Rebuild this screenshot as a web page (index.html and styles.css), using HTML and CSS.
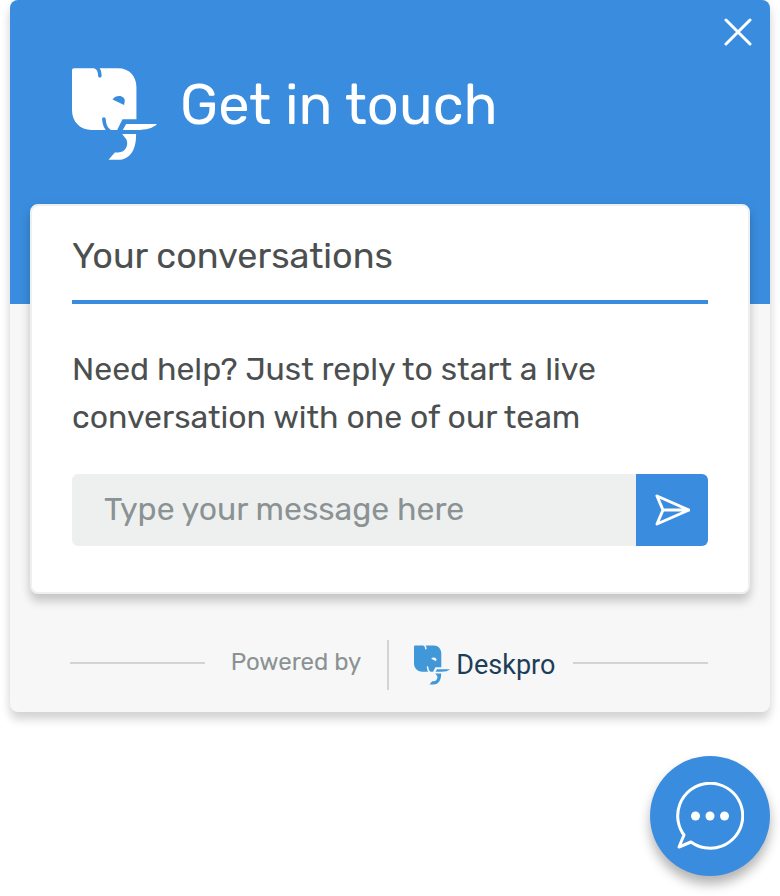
FILE: index.html
```
<!DOCTYPE html>
<html lang="en">
<head>
<meta charset="utf-8">
<meta name="viewport" content="width=device-width, initial-scale=1">
<title>Get in touch</title>
<link rel="stylesheet" href="styles.css">
</head>
<body>
<svg class="symbols" aria-hidden="true">
  <symbol id="elephant" viewBox="36 39 256 276">
    <path fill="currentColor" d="M36 45a6 6 0 0 1 6-6H175C208 39 230 63 230 95V193H188L172 225H95C60 225 36 200 36 165Z"/>
    <path fill="currentColor" d="M199 207H292C281 219 260 225 230 225H189Z"/>
    <path fill="currentColor" d="M187 237H229C230 285 210 315 175 315H146L165 293H175C198 293 207 270 200 254Z"/>
    <path class="cut" d="M158 133C168 118 194 120 195 137L193 150Z"/>
    <path class="groove" d="M108 36C118 41 120 50 120 62M132 192C133 212 139 222 149 229"/>
  </symbol>
</svg>
<main class="panel">
  <header class="hero">
    <svg class="hero-logo" aria-hidden="true"><use href="#elephant"/></svg>
    <h1>Get in touch</h1>
    <button class="close" type="button" aria-label="Close">
      <svg viewBox="0 0 28 28" aria-hidden="true"><path d="M2 2 26 26M26 2 2 26"/></svg>
    </button>
  </header>
  <section class="card">
    <h2>Your conversations</h2>
    <p>Need help? Just reply to start a live conversation with one of our team</p>
    <form class="composer">
      <input type="text" placeholder="Type your message here" aria-label="Message">
      <button type="button" aria-label="Send">
        <svg viewBox="0 0 36 32" aria-hidden="true"><path d="M3 2 35 16 3 30 9 16ZM9 16H35"/></svg>
      </button>
    </form>
  </section>
  <footer class="powered">
    <span class="rule"></span>
    <span class="by">Powered by</span>
    <a class="brand" href="#"><svg class="brand-logo" aria-hidden="true"><use href="#elephant"/></svg>Deskpro</a>
    <span class="rule"></span>
  </footer>
</main>
<button class="launcher" type="button" aria-label="Open chat">
  <svg viewBox="0 0 68 68" aria-hidden="true">
    <path d="M8 53A32.500 32.500 0 1 1 15 60L3 65Z"/>
    <g class="dots"><circle cx="19.500" cy="34" r="4.500"/><circle cx="34" cy="34" r="4.500"/><circle cx="48.500" cy="34" r="4.500"/></g>
  </svg>
</button>
</body>
</html>
```
FILE: styles.css
```
* { box-sizing: border-box; }

body {
  margin: 0;
  padding: 0 10px 20px;
  background: #fff;
  color: #4c4f50;
  font-family: Rubik, Roboto, sans-serif;
  display: flex;
  flex-direction: column;
}

h1, h2, p { margin: 0; font-weight: 400; }
button { border: 0; padding: 0; background: #3a8dde; cursor: pointer; }
svg { display: block; fill: none; stroke-linecap: round; stroke-linejoin: round; }
.symbols { position: absolute; width: 0; height: 0; }

.panel {
  --page: #f7f7f7;
  border-radius: 8px;
  background: var(--page);
  box-shadow: 0 8px 10px rgba(0, 0, 0, 0.14), 0 2px 12px rgba(0, 0, 0, 0.06);
}

.hero {
  position: relative;
  display: flex;
  align-items: flex-start;
  gap: 23px;
  padding: 68px 62px 144px;
  border-radius: 8px 8px 0 0;
  background: #3a8dde;
  color: #fff;
}
.hero-logo { width: 85px; height: 92px; flex: none; --hole: #3a8dde; }
.cut { fill: var(--hole); }
.groove { stroke: var(--hole); stroke-width: 11; }
h1 { font-size: 56px; line-height: 74px; }

.close { position: absolute; top: 18px; right: 18px; }
.close svg { width: 28px; height: 28px; stroke: #fff; stroke-width: 3; }

.card {
  position: relative;
  margin: -100px 20px 0;
  padding: 24px 40px 46px;
  border: 2px solid #eeefef;
  border-radius: 8px;
  background: #fff;
  box-shadow: 0 8px 10px rgba(0, 0, 0, 0.16), 0 2px 12px rgba(0, 0, 0, 0.07);
}
h2 {
  padding-bottom: 18px;
  border-bottom: 4px solid #3a8dde;
  font-size: 36px;
  line-height: 52px;
}
.card p { margin-top: 41px; font-size: 32px; line-height: 48px; }

.composer { display: flex; height: 72px; margin-top: 33px; }
.composer input {
  flex: 1;
  min-width: 0;
  padding: 0 32px 2px;
  border: 0;
  border-radius: 6px 0 0 6px;
  background: #eef0f0;
  color: #4c4f50;
  font: 32px Rubik, Roboto, sans-serif;
}
.composer input::placeholder { color: #8b9293; opacity: 1; }
.composer button {
  display: grid;
  place-items: center;
  width: 72px;
  border-radius: 0 6px 6px 0;
}
.composer svg { width: 36px; height: 32px; stroke: #fff; stroke-width: 3; }

.powered {
  display: flex;
  align-items: center;
  padding: 46px 62px 22px 60px;
}
.rule { flex: 1; height: 2px; margin-top: -4px; background: #d0d4d4; }
.by {
  padding: 9px 26px 15px;
  border-right: 2px solid #d0d4d4;
  color: #8b9293;
  font-size: 24px;
  line-height: 26px;
}
.brand {
  display: flex;
  align-items: center;
  gap: 6px;
  padding: 0 18px 0 25px;
  color: #1c3e57;
  font: 27px/36px Roboto, sans-serif;
  text-decoration: none;
}
.brand-logo { width: 36px; height: 40px; color: #4198d8; --hole: var(--page); }

.launcher {
  align-self: flex-end;
  display: grid;
  place-items: center;
  width: 120px;
  height: 120px;
  margin-top: 44px;
  border-radius: 50%;
  box-shadow: 0 8px 12px rgba(0, 0, 0, 0.3);
}
.launcher svg { width: 68px; height: 68px; stroke: #fff; stroke-width: 3; }
.dots { fill: #fff; stroke: none; }
```
